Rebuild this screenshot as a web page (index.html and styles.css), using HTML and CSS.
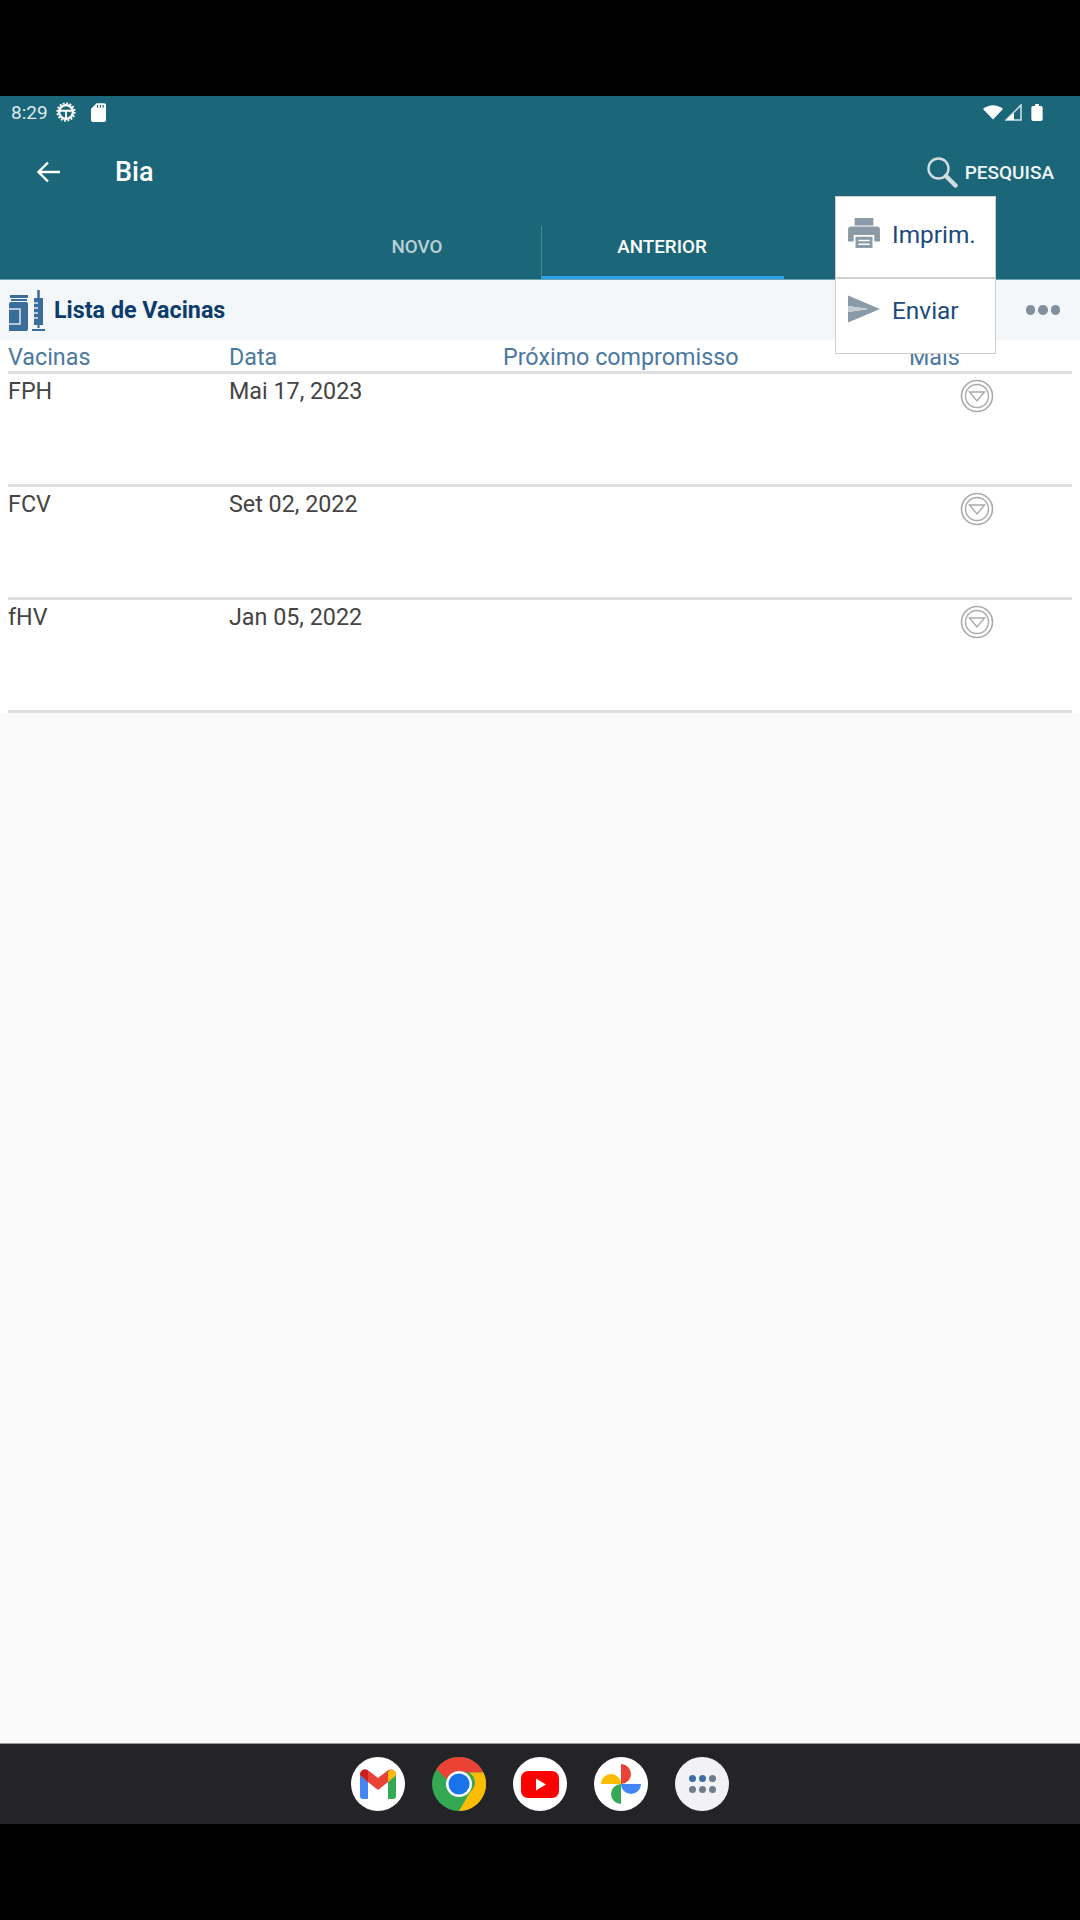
FILE: index.html
```html
<!DOCTYPE html>
<html lang="pt">
<head>
<meta charset="utf-8">
<title>Lista de Vacinas</title>
<link rel="stylesheet" href="styles.css">
</head>
<body>
<div class="screen">
  <div class="black-top"></div>
  <header class="appbar">
    <div class="status">
      <div class="status-left">
        <span class="time">8:29</span>
        <svg class="gear" width="20" height="20" viewBox="0 0 22 22"><circle cx="11" cy="11" r="7.600" fill="none" stroke="#fff" stroke-width="2.600"/><circle cx="11" cy="11" r="9.600" fill="none" stroke="#fff" stroke-width="2" stroke-dasharray="2 1.770"/><path d="M4 9.600h14M11 9.600v8" stroke="#fff" stroke-width="2"/></svg>
        <svg class="sd" width="15" height="19" viewBox="0 0 16 20"><path d="M6 0h8a2 2 0 0 1 2 2v16a2 2 0 0 1-2 2H2a2 2 0 0 1-2-2V6z" fill="#fff"/><path d="M7 2v3M10 2v3M13 2v3" stroke="#1c6679" stroke-width="1.200"/></svg>
      </div>
      <div class="status-right">
        <svg width="20" height="16" viewBox="0 0 20 15"><path d="M0 4.500Q10-3 20 4.500L10 15z" fill="#fff"/></svg>
        <svg width="17" height="17" viewBox="0 0 17 17"><path d="M16 1v15H1z" fill="none" stroke="#d5e3e7" stroke-width="1.500"/><path d="M9 9v7H1z" fill="#fff"/></svg>
        <svg class="batt" width="12" height="17" viewBox="0 0 12 18"><path d="M4 0h4v2h2a2 2 0 0 1 2 2v12a2 2 0 0 1-2 2H2a2 2 0 0 1-2-2V4a2 2 0 0 1 2-2h2z" fill="#fff"/></svg>
      </div>
    </div>
    <div class="toolbar">
      <svg class="back" width="24" height="22" viewBox="0 0 24 22"><path d="M23 11H2M11 1.500 1.500 11l9.500 9.500" fill="none" stroke="#fff" stroke-width="2.400"/></svg>
      <span class="title">Bia</span>
      <div class="search">
        <svg width="32" height="32" viewBox="0 0 32 32"><circle cx="12.500" cy="12.500" r="10" fill="none" stroke="#cfdde1" stroke-width="2.400"/><path d="M20 20l9.500 9.500" stroke="#cfdde1" stroke-width="4.500" stroke-linecap="round"/></svg>
        <span>PESQUISA</span>
      </div>
    </div>
    <nav class="tabs">
      <div class="tab tab-new">NOVO</div>
      <div class="tab tab-active">ANTERIOR</div>
    </nav>
  </header>

  <main class="content">
    <div class="listbar">
      <svg class="vial" width="37" height="41" viewBox="0 0 37 41">
        <path d="M1 5h18v3H1zM2 9h16v2H2z" fill="#3a6d99"/>
        <path d="M0 14a2 2 0 0 1 2-2h15a2 2 0 0 1 2 2v25a2 2 0 0 1-2 2H0z" fill="#3a6d99"/>
        <path d="M0 19h11v15H0" fill="none" stroke="#dfe8ef" stroke-width="1.500"/>
        <path d="M29.500 0v8" stroke="#3a6d99" stroke-width="2.500"/>
        <path d="M25 8h9v27h-9z" fill="#3a6d99"/>
        <path d="M24 13h5M24 18h5M24 23h5M24 28h5" stroke="#dfe8ef" stroke-width="1.300"/>
        <path d="M29.500 35v3M23 40h13" stroke="#3a6d99" stroke-width="2.200"/>
      </svg>
      <h1 class="listtitle">Lista de Vacinas</h1>
      <div class="dots"><i></i><i></i><i></i></div>
    </div>

    <div class="table">
      <div class="row head">
        <span>Vacinas</span><span>Data</span><span>Próximo compromisso</span><span>Mais</span>
      </div>
      <div class="row item">
        <span>FPH</span><span>Mai 17, 2023</span><span></span>
        <svg class="expand" width="34" height="34" viewBox="0 0 34 34"><circle cx="17" cy="17" r="15.500" fill="none" stroke="#a9a9a9" stroke-width="1.600"/><circle cx="17" cy="17" r="11.500" fill="none" stroke="#a9a9a9" stroke-width="1.400"/><path d="M9.500 13h15L17 22z" fill="none" stroke="#a9a9a9" stroke-width="1.400"/></svg>
      </div>
      <div class="row item">
        <span>FCV</span><span>Set 02, 2022</span><span></span>
        <svg class="expand" width="34" height="34" viewBox="0 0 34 34"><circle cx="17" cy="17" r="15.500" fill="none" stroke="#a9a9a9" stroke-width="1.600"/><circle cx="17" cy="17" r="11.500" fill="none" stroke="#a9a9a9" stroke-width="1.400"/><path d="M9.500 13h15L17 22z" fill="none" stroke="#a9a9a9" stroke-width="1.400"/></svg>
      </div>
      <div class="row item">
        <span>fHV</span><span>Jan 05, 2022</span><span></span>
        <svg class="expand" width="34" height="34" viewBox="0 0 34 34"><circle cx="17" cy="17" r="15.500" fill="none" stroke="#a9a9a9" stroke-width="1.600"/><circle cx="17" cy="17" r="11.500" fill="none" stroke="#a9a9a9" stroke-width="1.400"/><path d="M9.500 13h15L17 22z" fill="none" stroke="#a9a9a9" stroke-width="1.400"/></svg>
      </div>
    </div>
  </main>

  <footer class="dock">
    <div class="app">
      <svg width="38" height="30" viewBox="0 0 38 30"><path d="M1 6v21a3 3 0 0 0 3 3h5V13z" fill="#4285f4"/><path d="M37 6v21a3 3 0 0 1-3 3h-5V13z" fill="#34a853"/><path d="M1 6c0-5 5-7 9-4l9 7 9-7c4-3 9-1 9 4l-8 7-10 8-10-8z" fill="#ea4335"/><path d="M29 13V2.500C33-1 37 2 37 6z" fill="#fbbc04"/><path d="M1 6c0-5 5-7 8-4.500V13z" fill="#c5221f"/></svg>
    </div>
    <div class="app app-chrome">
      <svg width="54" height="54" viewBox="0 0 54 54"><circle cx="27" cy="27" r="27" fill="#34a853"/><path d="M27 0a27 27 0 0 1 24.500 15.500H27a11.500 11.500 0 0 0-11 8L4.500 12A27 27 0 0 1 27 0z" fill="#ea4335"/><path d="M51.500 15.500A27 27 0 0 1 27 54l11-19a11.500 11.500 0 0 0-1-19.500z" fill="#fbbc04"/><circle cx="27" cy="27" r="13" fill="#fff"/><circle cx="27" cy="27" r="10.500" fill="#1a73e8"/></svg>
    </div>
    <div class="app">
      <svg width="38" height="27" viewBox="0 0 38 27"><rect width="38" height="27" rx="7" fill="#f00"/><path d="M15 7.500v12l10-6z" fill="#fff"/></svg>
    </div>
    <div class="app">
      <svg width="40" height="40" viewBox="0 0 40 40"><path d="M20 20V0a10 10 0 0 1 0 20z" fill="#ea4335"/><path d="M20 20H40a10 10 0 0 1-20 0z" fill="#4285f4"/><path d="M20 20v20a10 10 0 0 1 0-20z" fill="#34a853"/><path d="M20 20H0a10 10 0 0 1 20 0z" fill="#fbbc04"/></svg>
    </div>
    <div class="app app-grid">
      <i class="blue"></i><i class="blue"></i><i></i><i></i><i></i><i></i>
    </div>
  </footer>
  <div class="black-bottom"></div>

  <div class="popup">
    <div class="popup-item popup-print">
      <svg class="print-icon" width="32" height="30" viewBox="0 0 34 32"><path d="M7 0h20v8H7z" fill="#8a9aa6"/><path d="M3 9h28a3 3 0 0 1 3 3v13h-6v-7H6v7H0V12a3 3 0 0 1 3-3z" fill="#8a9aa6"/><path d="M8 20h18v12H8z" fill="#8a9aa6"/><path d="M11 24h12M11 28h12" stroke="#fff" stroke-width="1.800"/></svg>
      <span>Imprim.</span>
    </div>
    <div class="popup-item popup-send">
      <svg class="send-icon" width="32" height="28" viewBox="0 0 33 28"><path d="M0 0l33 14L0 28v-11l21-3-21-3z" fill="#8a9aa6"/><path d="M0 11l21 3-21 3z" fill="#c3ccd3"/></svg>
      <span>Enviar</span>
    </div>
  </div>
</div>
</body>
</html>
```

FILE: styles.css
```css
* { box-sizing: border-box; }
html, body { margin: 0; padding: 0; }
body { width: 1080px; height: 1920px; background: #000; font-family: Roboto, "Noto Sans", sans-serif; overflow: hidden; }

.screen { position: relative; width: 1080px; height: 1920px; display: flex; flex-direction: column; }
.black-top { height: 96px; background: #000; flex: none; }
.black-bottom { height: 96px; background: #000; flex: none; }

.appbar { flex: none; height: 184px; background: #1c6679; color: #fff; display: flex; flex-direction: column; border-bottom: 1px solid #6ea2ae; }
.status { height: 32px; padding: 0 37px 0 11px; display: flex; justify-content: space-between; align-items: center; }
.status-left { display: flex; align-items: center; }
.time { font-size: 19px; color: #dfe9ec; width: 45px; }
.sd { margin-left: 15px; }
.status-right { display: flex; align-items: center; gap: 2px; }
.batt { margin-left: 7px; }

.toolbar { height: 88px; padding: 0 26px 0 37px; display: flex; align-items: center; flex: none; }
.title { margin-left: 54px; font-size: 27px; font-weight: 500; }
.search { margin-left: auto; display: flex; align-items: center; gap: 7px; font-size: 19px; font-weight: 500; color: #f0f5f6; }

.tabs { margin-top: auto; display: flex; height: 56px; padding-left: 298px; }
.tab { width: 243px; display: flex; align-items: center; justify-content: center; padding: 1px 0 9px; font-size: 18.800px; font-weight: 500; color: #b9d0d6; margin-top: 3px; border-bottom: 3px solid transparent; }
.tab-new { padding-right: 5px; }
.tab-active { color: #fff; border-left: 1px solid #4e8898; border-bottom-color: #2aa3e8; padding-right: 2px; }

.content { flex: 1; background: #fafafa; display: flex; flex-direction: column; }
.listbar { height: 60px; background: #f3f7fa; display: flex; align-items: center; padding: 0 20px 0 9px; }
.vial { flex: none; }
.listtitle { margin: 0 0 0 8px; font-size: 23.300px; font-weight: 700; color: #0c3c6c; }
.dots { margin-left: auto; display: flex; gap: 3px; }
.dots i { width: 9.500px; height: 9.500px; border-radius: 50%; background: #80909e; display: block; }

.table { background: #fff; padding: 0 8px; }
.row { display: grid; grid-template-columns: 221px 274px 406px 1fr; }
.head { height: 34px; border-bottom: 3px solid #dedede; font-size: 23.300px; color: #4a78a2; line-height: 34px; }
.item { height: 113px; font-size: 23.300px; color: #444; border-bottom: 3px solid #dedede; line-height: 34px; }
.expand { margin: 5px 0 0 51px; }

.dock { flex: none; height: 81px; background: #232328; border-top: 1px solid #9a9a9e; display: flex; justify-content: center; align-items: center; gap: 27px; }
.app { width: 54px; height: 54px; border-radius: 50%; background: #fff; display: flex; align-items: center; justify-content: center; }
.app-chrome { background: transparent; }
.app-grid { background: #f2f2f6; display: grid; grid-template-columns: repeat(3, 7px); gap: 4px 3px; align-content: center; justify-content: center; }
.app-grid i { width: 7px; height: 7px; border-radius: 50%; background: #6f7a8c; display: block; }
.app-grid i.blue { background: #3c6ea5; }

.popup { position: absolute; left: 835px; top: 196px; width: 161px; height: 158px; background: #fff; border: 1px solid #cfcfcf; display: flex; flex-direction: column; }
.popup-item { display: flex; align-items: center; gap: 12px; padding-left: 12px; font-size: 24.400px; color: #1c4a7c; }
.popup-print { height: 80px; padding-bottom: 6px; }
.print-icon { margin-top: -2px; }
.send-icon { margin-top: -4px; }
.popup-send { flex: 1; border-top: 2px solid #cfcfcf; padding-bottom: 11px; }
```
